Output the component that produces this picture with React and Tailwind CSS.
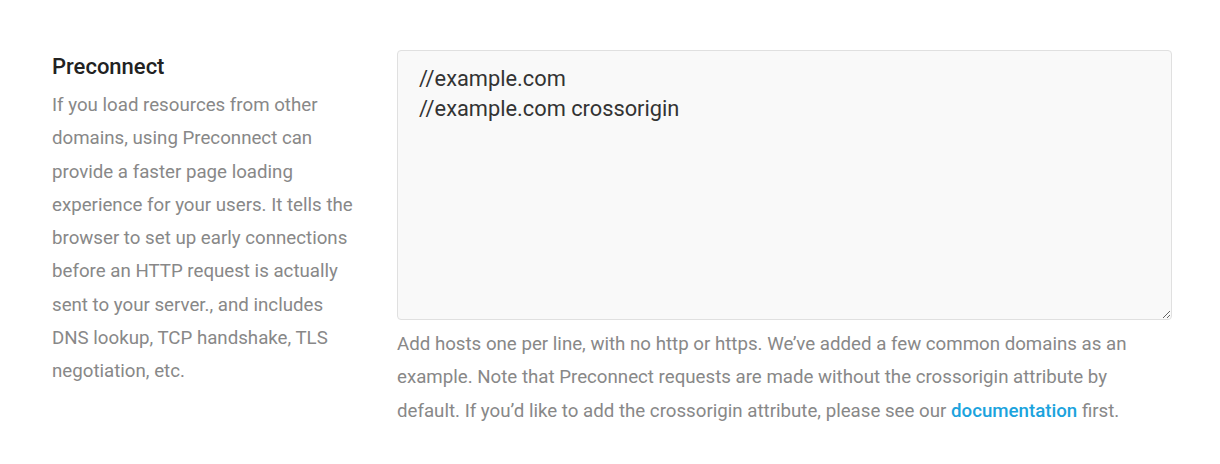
import React from 'react';

const App = () => {
  return (
    <div className="w-[1220px] h-[464px] bg-white" style={{ fontFamily: 'Roboto, sans-serif' }}>
      <div className="flex pt-[50px] pl-[52px]">
        <div className="w-[302px] shrink-0">
          <h3 className="text-[22px] leading-[30px] font-medium text-[#222] mt-[2px]">Preconnect</h3>
          <p className="mt-[7px] text-[18.7px] leading-[33.3px] text-[#888]">
            If you load resources from other domains, using Preconnect can provide a faster page loading experience for your users. It tells the browser to set up early connections before an HTTP request is actually sent to your server., and includes DNS lookup, TCP handshake, TLS negotiation, etc.
          </p>
        </div>
        <div className="ml-[43px] w-[775px]">
          <textarea
            className="block w-full h-[270px] bg-[#f9f9f9] border border-[#e0e0e0] rounded-[4px] pt-[13px] px-[21px] text-[21.8px] leading-[30px] text-[#333] outline-none"
            defaultValue={'//example.com\n//example.com crossorigin'}
          />
          <p className="mt-[8px] text-[18.7px] leading-[33.3px] text-[#888]">
            Add hosts one per line, with no http or https. We’ve added a few common domains as an example. Note that Preconnect requests are made without the crossorigin attribute by default. If you’d like to add the crossorigin attribute, please see our{' '}
            <a href="#" className="text-[#1ba3dd] font-medium">documentation</a> first.
          </p>
        </div>
      </div>
    </div>
  );
};

export default App;
